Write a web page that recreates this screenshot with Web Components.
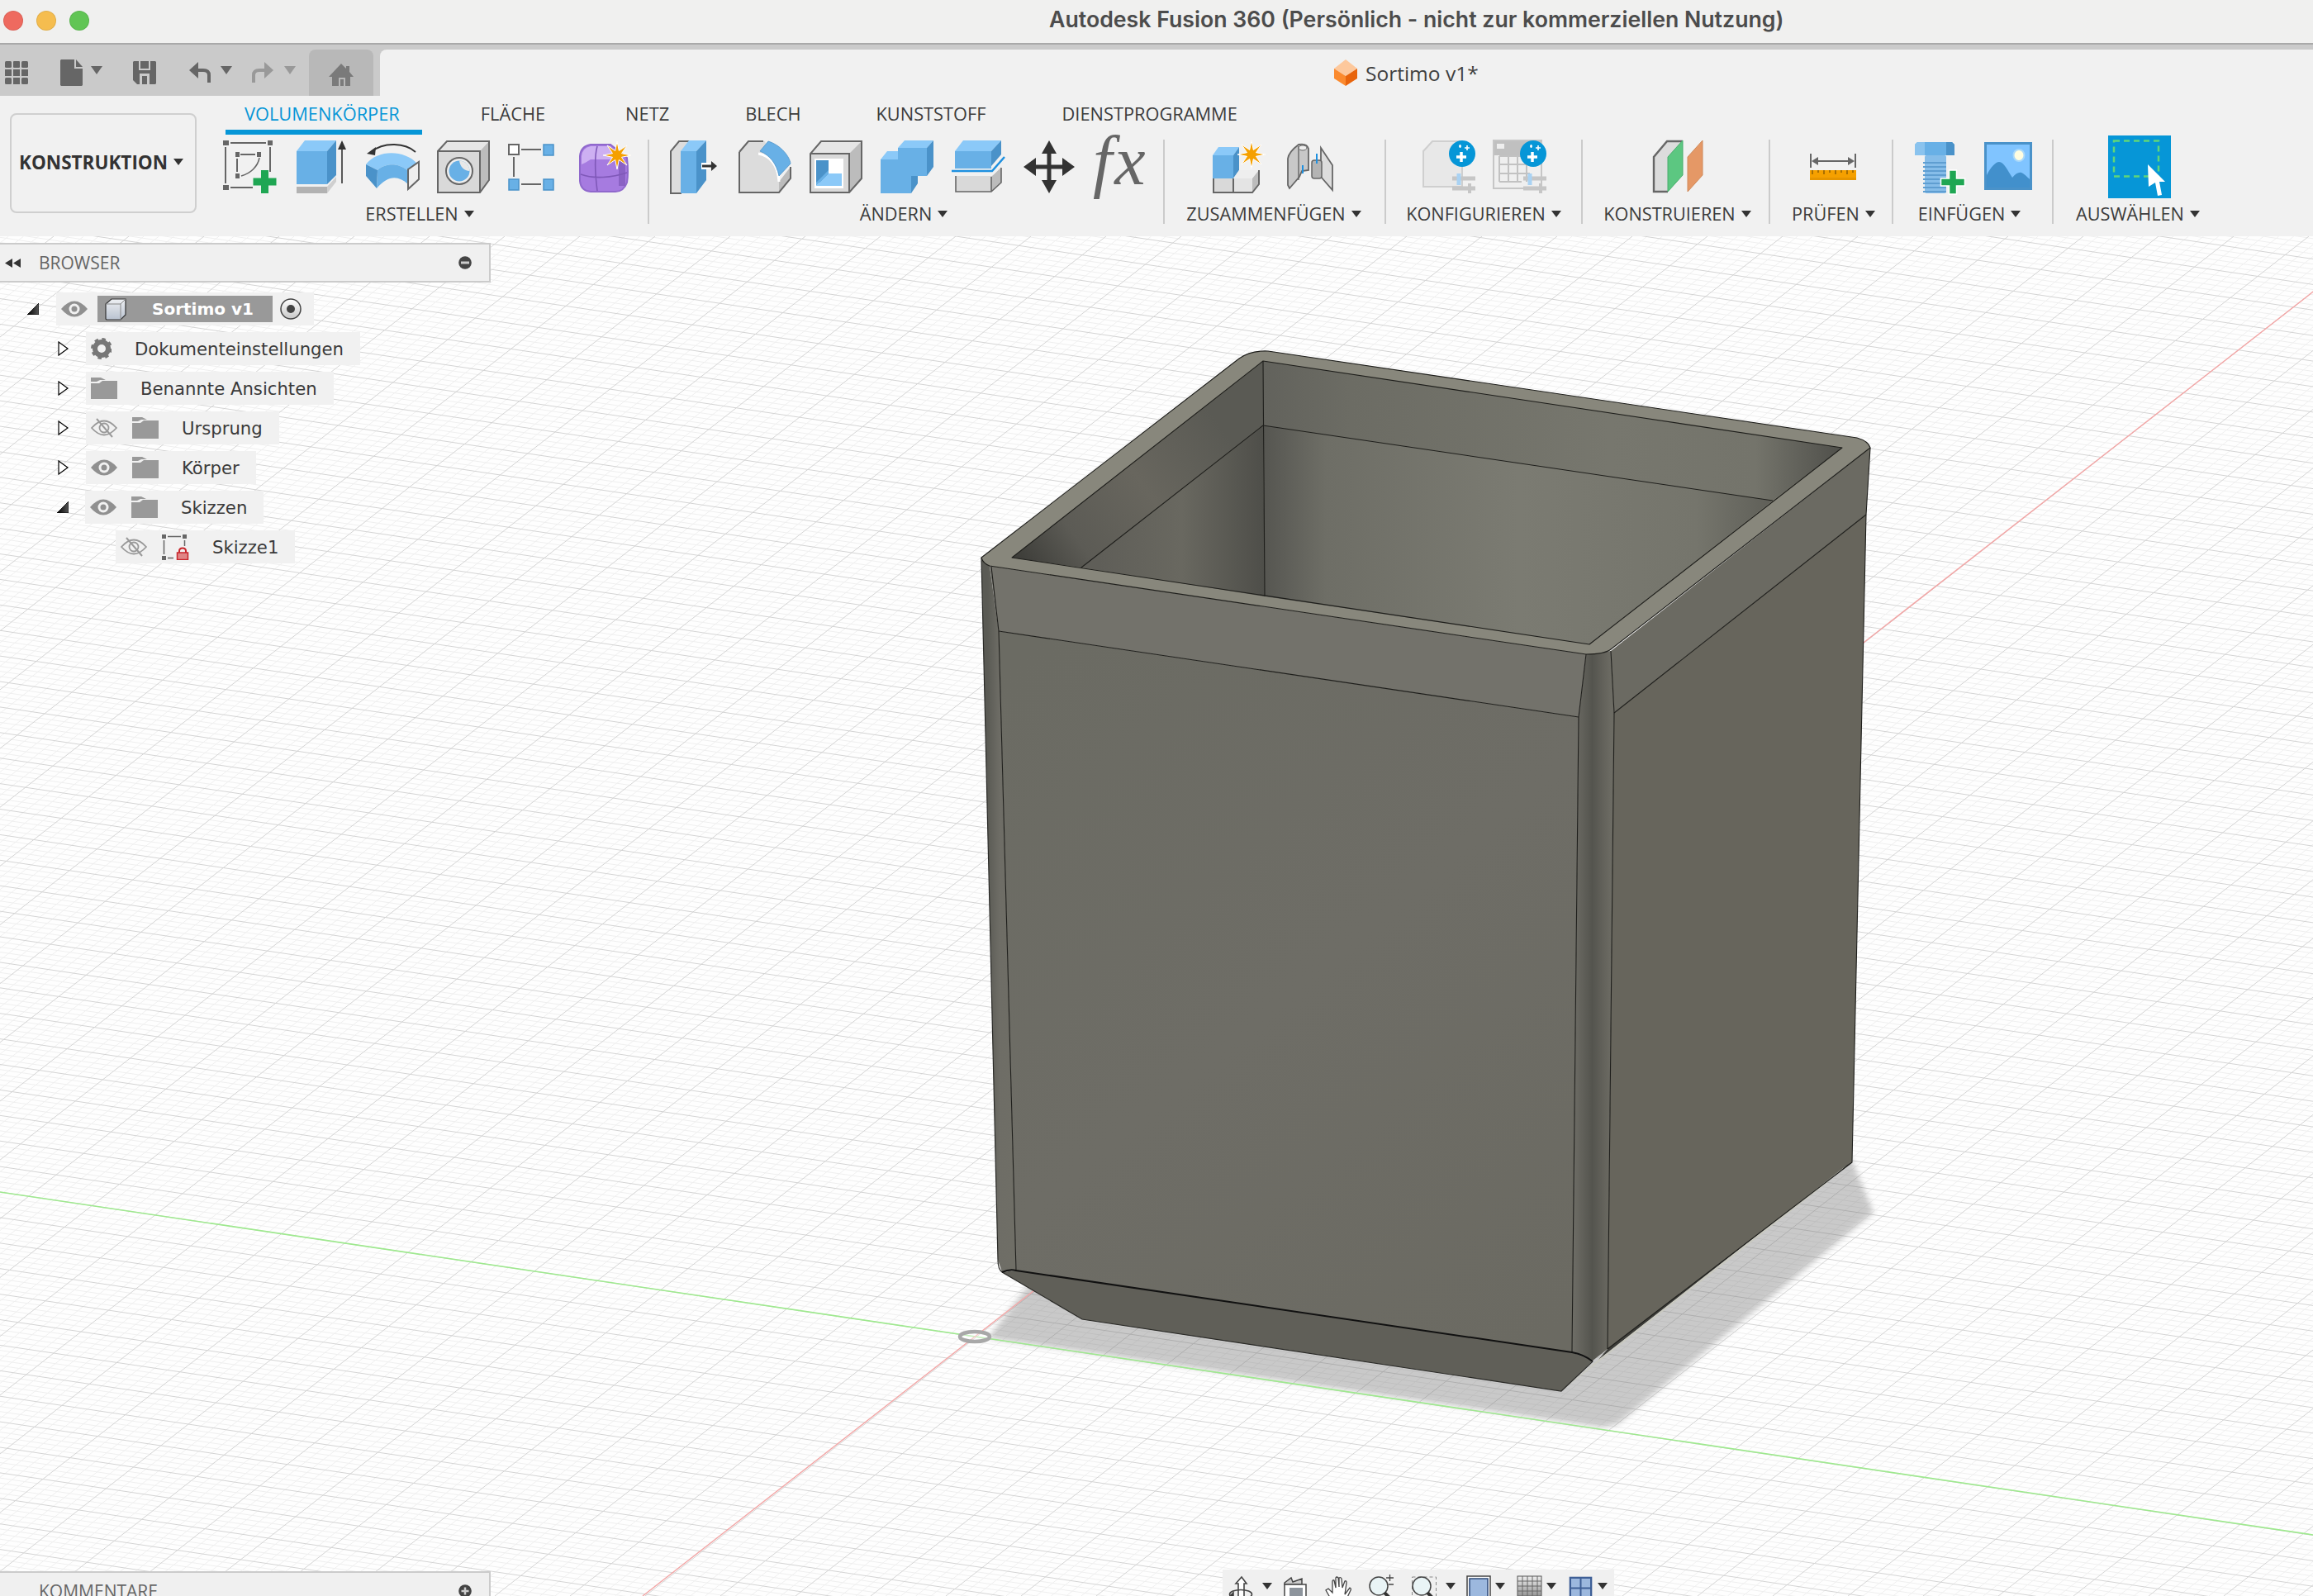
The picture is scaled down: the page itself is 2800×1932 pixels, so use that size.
<!DOCTYPE html>
<html lang="de">
<head>
<meta charset="utf-8">
<title>Autodesk Fusion 360</title>
<style>
  html, body { margin: 0; padding: 0; background: #fff; overflow: hidden; }
</style>
</head>
<body>
<fusion-app></fusion-app>
<script>
const BLUE = '#68b0e6', BLUE_LT = '#8bc9f8', BLUE_DK = '#4a92c9', EDGE = '#666';

function star(cx, cy, R, r, n) {
  let pts = [];
  for (let i = 0; i < n * 2; i++) {
    const a = -Math.PI / 2 + i * Math.PI / n, q = i % 2 ? r : R;
    pts.push((cx + q * Math.cos(a)).toFixed(1) + ',' + (cy + q * Math.sin(a)).toFixed(1));
  }
  return `<polygon points="${pts.join(' ')}" fill="#f5a000" stroke="#fff" stroke-width="1"/>`;
}

function plus(cx, cy, s, t) {
  const a = s / 2, b = t / 2;
  return `<path d="M${cx - b},${cy - a}h${t}v${a - b}h${a - b}v${t}h-${a - b}v${a - b}h-${t}v-${a - b}h-${a - b}v-${t}h${a - b}z" fill="#1fa653"/>`;
}

function sparkle(cx, cy) {
  return `<circle cx="${cx}" cy="${cy}" r="16" fill="#0696d7"/>
    <path d="M${cx - 7},${cy + 4}h12M${cx - 1},${cy - 2}v12" stroke="#fff" stroke-width="3.5"/>
    <path d="M${cx + 3},${cy - 7}h6M${cx + 6},${cy - 10}v6M${cx - 4},${cy - 9}h3M${cx - 2.5},${cy - 11}v4" stroke="#fff" stroke-width="1.6"/>`;
}

// toolbar icons: [dx, dy, markup], drawn in a 64 box
const TOOLS = {
  sketch: [0, 0, `
    <g fill="${EDGE}"><rect x="0" y="0" width="7" height="6"/><rect x="54" y="0" width="6" height="6"/><rect x="0" y="54" width="7" height="6"/>
    <rect x="15" y="14" width="5" height="6"/><rect x="41" y="14" width="5" height="6"/><rect x="15" y="40" width="5" height="6"/></g>
    <path d="M9,3H52M3,8V52M9,57H36M57,8V38M21,17H39M17,22V38" stroke="${EDGE}" stroke-width="2" fill="none"/>
    <path d="M44,21C42,32 33,40 22,43" stroke="${EDGE}" stroke-width="1.6" fill="none"/>
    ${plus(50.5, 50, 28, 9)}`],
  extrude: [3, 0, `
    <polygon points="0,56 37,56 37,64 0,64" fill="#b2b2b2"/><polygon points="37,56 48,44 48,50 37,64" fill="#cfcfcf"/>
    <polygon points="0,13 37,13 37,53 0,53" fill="${BLUE}"/><polygon points="0,13 10,0 48,0 37,13" fill="${BLUE_LT}"/>
    <polygon points="37,13 48,0 48,42 37,53" fill="${BLUE_DK}"/>
    <path d="M55,52V8" stroke="#333" stroke-width="1.6"/><polygon points="55,0 60,11 50,11" fill="#333"/>`],
  revolve: [1, 3, `
    <path d="M60,11C48,0 22,-2 6,11" fill="none" stroke="#333" stroke-width="1.8"/><polygon points="1,13 12,5 11,15" fill="#333"/>
    <path d="M0,26C14,8 46,8 62,25L51,34C40,24 24,24 14,33Z" fill="${BLUE_LT}"/>
    <path d="M14,33C24,24 40,24 51,34V50C38,38 26,40 13,55Z" fill="${BLUE}"/>
    <path d="M0,26L14,33L13,55L0,40Z" fill="${BLUE_DK}"/>
    <polygon points="51,32 64,23 64,44 51,56" fill="#eee" stroke="${EDGE}" stroke-width="2"/>`],
  hole: [1, 0, `
    <polygon points="1,13 12,1 63,1 52,13" fill="#e6e6e6"/><polygon points="52,13 63,1 63,48 52,63" fill="#bcbcbc"/>
    <rect x="1" y="13" width="51" height="50" fill="#d9d9d9"/>
    <path d="M1,63V13L12,1H63V48L52,63ZM1,13H52V63" fill="none" stroke="${EDGE}" stroke-width="2"/>
    <circle cx="27" cy="37" r="16" fill="#eee" stroke="${EDGE}" stroke-width="2"/>
    <circle cx="27" cy="37" r="12.5" fill="${BLUE}"/>
    <path d="M27,24.5A12.5,12.5 0 0 1 39.5,37C33,37 28,32 27,24.5Z" fill="#e8e8e8"/>`],
  pattern: [1, 4, `
    <rect x="1" y="1" width="12" height="12" fill="#fff" stroke="${EDGE}" stroke-width="2"/>
    <g fill="${BLUE}" stroke="${BLUE_DK}" stroke-width="1.5"><rect x="43" y="1" width="12" height="13"/><rect x="1" y="43" width="12" height="13"/><rect x="43" y="43" width="12" height="13"/></g>
    <path d="M16,7H40M7,16V40M16,49H40" stroke="${EDGE}" stroke-width="2"/>`],
  form: [1, 1, `
    <path d="M1,18Q2,6 14,4H38L58,20Q60,38 58,50Q54,61 44,61H14Q2,60 1,48Z" fill="#a67be0" stroke="#8f68cc" stroke-width="2"/>
    <path d="M3,18Q4,8 14,6H38L50,22H14Q8,26 3,28Z" fill="#cdb0f2"/>
    <path d="M22,6C18,20 20,44 22,60M2,40C18,46 40,44 58,38" fill="none" stroke="#7f58b8" stroke-width="1.6"/>
    <rect x="48" y="24" width="8" height="30" fill="#7f58b8" opacity=".7"/>
    ${star(46, 17, 17, 6, 8)}`],
  presspull: [4, 0, `
    <path d="M14,64H1V13L11,1H24" fill="#ddd" stroke="${EDGE}" stroke-width="2"/>
    <polygon points="13,13 23,0 44,0 32,13" fill="${BLUE_LT}"/><rect x="13" y="13" width="19" height="51" fill="${BLUE}"/>
    <polygon points="32,13 44,0 44,48 32,64" fill="${BLUE_DK}"/>
    <rect x="38" y="27" width="10" height="8" fill="#fff"/>
    <path d="M39,31H51" stroke="#333" stroke-width="3"/><polygon points="50,25 57,31 50,37" fill="#333"/>`],
  fillet: [1, 0, `
    <path d="M1,63V14L12,1H32L49,46V63Z" fill="#dcdcdc"/>
    <path d="M49,50L63,32V46L49,63Z" fill="#bcbcbc"/>
    <path d="M1,14L12,1H30M1,14V63H49L63,46V32" fill="none" stroke="${EDGE}" stroke-width="2"/>
    <path d="M24,16C38,18 48,30 49,50" fill="none" stroke="#fff" stroke-width="3"/>
    <path d="M26,13L36,1C52,6 62,20 63,28L49,43C46,28 38,18 26,13Z" fill="${BLUE}" stroke="${BLUE_DK}" stroke-width=".8"/>`],
  chamfer: [1, 0, `
    <polygon points="1,16 14,1 63,1 48,16" fill="#e6e6e6"/><polygon points="48,16 63,1 63,46 48,63" fill="#bcbcbc"/>
    <rect x="1" y="16" width="47" height="47" fill="#d9d9d9"/>
    <path d="M1,63V16L14,1H63V46L48,63ZM1,16H48V63" fill="none" stroke="${EDGE}" stroke-width="2"/>
    <rect x="6" y="22" width="35" height="36" fill="#fff"/>
    <rect x="8" y="24" width="15" height="27" fill="${BLUE_DK}"/>
    <polygon points="8,55 23,40 39,40 39,55" fill="${BLUE_LT}"/>
    <polygon points="8,51 23,36 23,40 8,55" fill="${BLUE}"/>`],
  combine: [1, 0, `
    <polygon points="0,23 8,13 22,13 22,23" fill="${BLUE_LT}"/>
    <rect x="0" y="23" width="37" height="41" fill="${BLUE}"/>
    <polygon points="37,43 37,64 45,52 45,43" fill="${BLUE_DK}"/>
    <polygon points="21,9 29,0 64,0 56,9" fill="${BLUE_LT}"/>
    <rect x="21" y="9" width="35" height="34" fill="${BLUE}"/>
    <polygon points="56,9 64,0 64,32 56,43" fill="${BLUE_DK}"/>`],
  split: [1, 0, `
    <polygon points="4,13 14,0 60,0 48,13" fill="${BLUE_LT}"/><rect x="4" y="13" width="44" height="21" fill="${BLUE}"/>
    <polygon points="48,13 60,0 60,17 48,31" fill="${BLUE_DK}"/>
    <path d="M0,37H49L64,20" fill="none" stroke="#1e90e0" stroke-width="2.5"/>
    <polygon points="5,43 50,43 60,32 60,51 48,62 5,62" fill="#d9d9d9"/>
    <polygon points="48,44 60,33 60,51 48,62" fill="#bcbcbc"/>
    <path d="M5,43V62H48L60,51V33M48,44V62" fill="none" stroke="${EDGE}" stroke-width="1.6"/>`],
  move: [2, 0, `
    <path d="M31,0L40,16H33.5V29.5H47V21L62,32L47,43V34.5H33.5V48H40L31,64L22,48H28.5V34.5H15V43L0,32L15,21V29.5H28.5V16H22Z" fill="#333"/>`],
  fx: [0, 0, `<text x="0" y="53" font-family="'Liberation Serif',serif" font-style="italic" font-size="84" letter-spacing="3" fill="#666">fx</text>`],
  joinnew: [0, 0, `
    <polygon points="0,18 7,8 32,8 25,18" fill="${BLUE_LT}"/><rect x="0" y="18" width="25" height="28" fill="${BLUE}"/>
    <polygon points="25,18 32,8 32,36 25,46" fill="${BLUE_DK}"/>
    <polygon points="25,46 32,36 56,36 47,46" fill="#eee"/>
    <rect x="1" y="46" width="24" height="17" fill="#d9d9d9"/><rect x="25" y="46" width="23" height="17" fill="#e4e4e4"/>
    <polygon points="48,46 56,36 56,53 48,63" fill="#bcbcbc"/>
    <path d="M1,46V63H48L56,53V36M25,46V63" fill="none" stroke="${EDGE}" stroke-width="2"/>
    ${star(47, 17, 17, 6, 8)}`],
  joint: [4, 4, `
    <path d="M1,18Q2,10 14,1Q24,-1 26,6V32L18,33L15,40L3,54L1,50Z" fill="#c8c8c8" stroke="${EDGE}" stroke-width="1.8"/>
    <path d="M14,3V44" stroke="${EDGE}" stroke-width="1.4"/>
    <ellipse cx="19" cy="5" rx="5" ry="3" fill="#eee" stroke="${EDGE}"/>
    <path d="M41,5L55,26V56L41,40Z" fill="#ddd" stroke="${EDGE}" stroke-width="1.8"/>
    <rect x="30" y="20" width="12" height="22" rx="3" fill="#b4b4b4" stroke="${EDGE}" stroke-width="1.5"/>
    <path d="M36,12V24M19,26V36" stroke="#1e90e0" stroke-width="2"/>`],
  config1: [1, 0, `
    <path d="M1,56V13L12,1H48V56Z" fill="#e8e8e8" stroke="#cfcfcf" stroke-width="2"/>
    ${sparkle(48, 16)}
    <path d="M36,46H64M36,58H64" stroke="#c6c6c6" stroke-width="5"/>
    <path d="M44,40V54" stroke="#a9d2f3" stroke-width="5"/><path d="M57,52V64" stroke="#c6c6c6" stroke-width="4"/>`],
  config2: [1, 0, `
    <rect x="0" y="0" width="58" height="58" fill="#efefef"/>
    <rect x="0" y="0" width="58" height="18" fill="#c0c0c0"/><rect x="4" y="4" width="9" height="6" fill="#eee"/>
    <rect x="0" y="0" width="58" height="58" fill="none" stroke="#c6c6c6" stroke-width="2"/>
    <path d="M7,19V50M18,19V50M29,19V50M40,19V50M7,19H44M7,29H44M7,40H44M7,50H34" stroke="#c2c2c2" stroke-width="2" fill="none"/>
    ${sparkle(48, 16)}
    <path d="M36,46H64M36,58H64" stroke="#c6c6c6" stroke-width="5"/>
    <path d="M44,40V54" stroke="#a9d2f3" stroke-width="5"/><path d="M57,52V64" stroke="#c6c6c6" stroke-width="4"/>`],
  construct: [4, 0, `
    <path d="M18,62H1V20L17,1H36" fill="#dcdcdc" stroke="${EDGE}" stroke-width="2.4"/>
    <polygon points="18,20 36,0 36,42 18,62" fill="#5cc781" stroke="#48ad6c"/>
    <polygon points="42,20 60,0 60,42 42,62" fill="#e59866" stroke="#d08a5a"/>`],
  measure: [6, 16, `
    <path d="M1,0V17M55,0V17M5,9H51" stroke="${EDGE}" stroke-width="2"/>
    <polygon points="2,9 10,4 10,14" fill="${EDGE}"/><polygon points="54,9 46,4 46,14" fill="${EDGE}"/>
    <rect x="0" y="20" width="56" height="12" fill="#f5a000"/><rect x="0" y="29" width="56" height="3" fill="#e69500"/>
    <path d="M3,20v5M10,20v3M17,20v5M24,20v3M31,20v5M38,20v3M45,20v5M52,20v3" stroke="#8a5a00" stroke-width="1.4"/>`],
  bolt: [5, 2, `
    <path d="M0,3L3,0H45L48,3V16H0Z" fill="${BLUE}"/><path d="M38,0H45L48,3V16H38Z" fill="${BLUE_DK}"/><path d="M0,3L3,0H12V16H0Z" fill="#8ac3ee"/>
    <rect x="12" y="16" width="26" height="46" rx="2" fill="#86bde9"/>
    <path d="M10,25H38M10,30H38M10,35H38M10,40H38M10,45H38M10,50H38M10,55H38M10,60H38" stroke="#5f9ed1" stroke-width="2"/>
    <path d="M41.5,34h9v10h10v9h-10v10h-9v-10h-10v-9h10z" fill="#1fa653" stroke="#fff" stroke-width="1.5"/>`],
  image: [3, 2, `
    <rect x="1.5" y="1.5" width="55" height="55" fill="#80c4ff" stroke="#4a92c9" stroke-width="3"/>
    <ellipse cx="42" cy="16" rx="6.5" ry="7" fill="#fffde0" stroke="#a9d8fa" stroke-width="2"/>
    <path d="M3,40C8,30 14,24 18,24C24,24 28,34 34,43C38,38 42,36 45,37C48,38 52,42 55,45V55H3Z" fill="#4290cc"/>`],
  select: [-7, -6, `
    <rect x="0" y="0" width="76" height="76" fill="#0696d7"/>
    <rect x="7" y="6.500" width="54" height="43" fill="none" stroke="#5fd67a" stroke-width="2.500" stroke-dasharray="7 5"/>
    <polygon points="48,35 69,56 62,56 65,72 60,73 57,57 49,62" fill="#fff"/>`]
};

class UiCaret extends HTMLElement {
  constructor() {
    super();
    this.attachShadow({ mode: 'open' }).innerHTML = `
      <style>
        :host {
          display: inline-block;
          width: 0;
          height: 0;
          border-left: var(--w, 6px) solid transparent;
          border-right: var(--w, 6px) solid transparent;
          border-top: var(--h, 8px) solid var(--c, #333);
        }
      </style>`;
  }
}

class ToolIcon extends HTMLElement {
  connectedCallback() {
    const [dx, dy, body] = TOOLS[this.getAttribute('name')];
    this.attachShadow({ mode: 'open' }).innerHTML = `
      <style>
        :host { display: block; width: 64px; height: 64px; }
        svg { display: block; overflow: visible; }
      </style>
      <svg width="64" height="64" viewBox="0 0 64 64"><g transform="translate(${dx} ${dy})">${body}</g></svg>`;
  }
}

class RibbonGroup extends HTMLElement {
  connectedCallback() {
    const w = this.getAttribute('width');
    const first = this.hasAttribute('first');
    const shift = Number(this.getAttribute('shift') || 0);
    this.attachShadow({ mode: 'open' }).innerHTML = `
      <style>
        :host {
          display: flex;
          flex-direction: column;
          align-items: center;
          box-sizing: border-box;
          width: ${w}px;
          height: 102px;
          border-left: 2px solid ${first ? 'transparent' : '#cbcbcb'};
        }
        .tools { display: flex; gap: 22px; height: 78px; padding-top: 1px; box-sizing: border-box; }
        .label {
          display: flex;
          align-items: center;
          gap: 7px;
          height: 24px;
          margin-left: ${shift * 2}px;
          font: 400 21.7px/24px "Open Sans", sans-serif;
          color: #3c3c3c;
          white-space: nowrap;
        }
      </style>
      <div class="tools"><slot></slot></div>
      <div class="label"><span>${this.getAttribute('label')}</span><ui-caret></ui-caret></div>`;
  }
}

class RibbonTabs extends HTMLElement {
  connectedCallback() {
    const tabs = [['VOLUMENKÖRPER', 0], ['FLÄCHE', 48], ['NETZ', 51], ['BLECH', 46], ['KUNSTSTOFF', 45], ['DIENSTPROGRAMME', 46]];
    this.attachShadow({ mode: 'open' }).innerHTML = `
      <style>
        :host { display: flex; height: 47px; padding-left: 25px; }
        .tab {
          box-sizing: border-box;
          height: 47px;
          padding: 0 23px;
          font: 400 21.8px/44px "Open Sans", sans-serif;
          color: #3c3c3c;
          white-space: nowrap;
        }
        .tab.on { color: #0696d7; border-bottom: 6px solid #0696d7; padding-right: 27px; }
      </style>
      ${tabs.map(([t, gap], i) => `<div class="tab ${i ? '' : 'on'}" style="margin-left:${gap}px">${t}</div>`).join('')}`;
  }
}

class RibbonBar extends HTMLElement {
  constructor() {
    super();
    this.attachShadow({ mode: 'open' }).innerHTML = `
      <style>
        :host { display: flex; height: 170px; background: #f1f1f1; }
        .side { width: 248px; flex: none; padding: 21px 0 0 12px; box-sizing: border-box; }
        .mode {
          box-sizing: border-box;
          width: 226px;
          height: 121px;
          border: 2px solid #cfcfcf;
          border-radius: 8px;
          display: flex;
          align-items: center;
          padding: 0 0 3px 9px;
          gap: 7px;
          font: 700 22.500px "Open Sans", sans-serif;
          color: #333;
          white-space: nowrap;
        }
        .groups { display: flex; margin-top: 6px; }
      </style>
      <div class="side"><div class="mode"><span>KONSTRUKTION</span><ui-caret></ui-caret></div></div>
      <div class="main">
        <ribbon-tabs></ribbon-tabs>
        <div class="groups">
          <ribbon-group first width="536" label="ERSTELLEN" shift="-9">
            <tool-icon name="sketch"></tool-icon><tool-icon name="extrude"></tool-icon><tool-icon name="revolve"></tool-icon>
            <tool-icon name="hole"></tool-icon><tool-icon name="pattern"></tool-icon><tool-icon name="form"></tool-icon>
          </ribbon-group>
          <ribbon-group width="624" label="ÄNDERN" shift="-3">
            <tool-icon name="presspull"></tool-icon><tool-icon name="fillet"></tool-icon><tool-icon name="chamfer"></tool-icon>
            <tool-icon name="combine"></tool-icon><tool-icon name="split"></tool-icon><tool-icon name="move"></tool-icon><tool-icon name="fx"></tool-icon>
          </ribbon-group>
          <ribbon-group width="268" label="ZUSAMMENFÜGEN" shift="-1">
            <tool-icon name="joinnew"></tool-icon><tool-icon name="joint"></tool-icon>
          </ribbon-group>
          <ribbon-group width="238" label="KONFIGURIEREN">
            <tool-icon name="config1"></tool-icon><tool-icon name="config2"></tool-icon>
          </ribbon-group>
          <ribbon-group width="227" label="KONSTRUIEREN" shift="2">
            <tool-icon name="construct"></tool-icon>
          </ribbon-group>
          <ribbon-group width="149" label="PRÜFEN" shift="3">
            <tool-icon name="measure"></tool-icon>
          </ribbon-group>
          <ribbon-group width="194" label="EINFÜGEN" shift="-4">
            <tool-icon name="bolt"></tool-icon><tool-icon name="image"></tool-icon>
          </ribbon-group>
          <ribbon-group width="212" label="AUSWÄHLEN" shift="-3">
            <tool-icon name="select"></tool-icon>
          </ribbon-group>
        </div>
      </div>`;
  }
}

class MacTitlebar extends HTMLElement {
  constructor() {
    super();
    this.attachShadow({ mode: 'open' }).innerHTML = `
      <style>
        :host {
          display: flex;
          align-items: center;
          box-sizing: border-box;
          height: 54px;
          padding: 0 0 2px 4px;
          background: #f0f0ef;
          border-bottom: 2px solid #a9a9a9;
        }
        .dot { width: 24px; height: 24px; border-radius: 50%; margin-right: 16px; box-sizing: border-box; border: 1px solid rgba(0,0,0,.08); }
        h1 {
          margin: -5px 0 0 1146px;
          font: 600 26.700px "Inter", sans-serif;
          color: #4c4c4c;
          white-space: nowrap;
        }
      </style>
      <span class="dot" style="background:#ee6a5f"></span>
      <span class="dot" style="background:#f5bd4f"></span>
      <span class="dot" style="background:#61c555"></span>
      <h1>Autodesk Fusion 360 (Persönlich - nicht zur kommerziellen Nutzung)</h1>`;
  }
}

class QuickBar extends HTMLElement {
  constructor() {
    super();
    this.attachShadow({ mode: 'open' }).innerHTML = `
      <style>
        :host { display: flex; height: 62px; background: #cacaca; padding-left: 6px; box-sizing: border-box; }
        .item { display: flex; align-items: center; height: 56px; margin-top: 6px; flex: none; }
        svg { display: block; }
        ui-caret { --w: 7.5px; --h: 10px; --c: #666; display: block; margin-top: -6px; }
        .home {
          display: flex; justify-content: center; padding-top: 17px; box-sizing: border-box;
          width: 78px; height: 56px; margin: 6px 0 0 16px; background: #b8b8b8; border-radius: 8px 8px 0 0; flex: none;
        }
        .doc {
          flex: 1; height: 56px; margin: 6px 0 0 8px; background: #f1f1f1; border-radius: 8px 0 0 0;
          display: flex; align-items: center; padding-left: 1155px; box-sizing: border-box;
          font: 400 24.5px "Open Sans", sans-serif; color: #3f3f3f; gap: 10px; white-space: nowrap;
        }
      </style>
      <div class="item"><svg width="28" height="28" fill="#666">
        <rect x="0" y="0" width="8" height="8" rx="1.500"/><rect x="10" y="0" width="8" height="8" rx="1"/><rect x="20" y="0" width="8" height="8" rx="1.500"/>
        <rect x="0" y="10" width="8" height="8"/><rect x="10" y="10" width="8" height="8"/><rect x="20" y="10" width="8" height="8"/>
        <rect x="0" y="20" width="8" height="8" rx="1.500"/><rect x="10" y="20" width="8" height="8"/><rect x="20" y="20" width="8" height="8" rx="1.500"/>
      </svg></div>
      <div class="item" style="margin-left:39px"><svg width="27" height="32" fill="#666"><path d="M1,0H17V11H27V31L26,32H1L0,31V1Z"/><path d="M19,0L27,9H19Z"/></svg></div>
      <div class="item" style="margin-left:10px"><ui-caret></ui-caret></div>
      <div class="item" style="margin-left:37px"><svg width="28" height="28"><path d="M1,0H27L28,1V27L27,28H5L0,23V1Z" fill="#666"/><path d="M7,0H21V11H7Z" fill="#cacaca"/><rect x="9" y="0" width="10" height="9" fill="#666"/><path d="M8,15H20V28H8Z" fill="#cacaca"/><rect x="11" y="18" width="6" height="10" fill="#666"/></svg></div>
      <div class="item" style="margin-left:40px"><svg width="26" height="26" fill="none"><path d="M24,25V16Q24,10 17,10H4" stroke="#666" stroke-width="4"/><polygon points="0,10 11,0 11,20" fill="#666"/></svg></div>
      <div class="item" style="margin-left:12px"><ui-caret></ui-caret></div>
      <div class="item" style="margin-left:24px"><svg width="26" height="26" fill="none"><path d="M2,25V16Q2,10 9,10H22" stroke="#999" stroke-width="4"/><polygon points="26,10 15,0 15,20" fill="#999"/></svg></div>
      <div class="item" style="margin-left:13px"><ui-caret style="--c:#999"></ui-caret></div>
      <div class="home"><svg width="30" height="28"><path d="M15,0L21,6V3H25V10L30,16H26V27H4V16H0Z" fill="#7a7a7a"/><rect x="12" y="17" width="8" height="10" fill="#b8b8b8"/><rect x="14" y="19" width="4" height="8" fill="#7a7a7a"/></svg></div>
      <div class="doc"><svg width="28" height="32"><polygon points="14,0 28,11 14,20 0,11" fill="#fdc89c"/><polygon points="0,11 14,20 14,32 0,23" fill="#fb8a2e"/><polygon points="28,11 14,20 14,32 28,23" fill="#e8640c"/></svg><span>Sortimo v1*</span></div>`;
  }
}

const TREE_ICONS = {
  eye: `<svg width="32" height="20"><path d="M0,10Q16,-9 32,10Q16,29 0,10Z" fill="#909090"/><circle cx="16" cy="10" r="6.500" fill="#f1f1f1"/><circle cx="16" cy="10" r="3.500" fill="#909090"/></svg>`,
  eyeoff: `<svg width="32" height="24"><path d="M1,12Q16,-5 31,12Q16,29 1,12Z" fill="none" stroke="#999" stroke-width="1.8"/><circle cx="16" cy="12" r="5.500" fill="none" stroke="#999" stroke-width="1.8"/><path d="M7,1L26,23" stroke="#999" stroke-width="2"/></svg>`,
  gear: `<svg width="25" height="26"><circle cx="13" cy="13" r="8" fill="none" stroke="#777" stroke-width="6"/><circle cx="13" cy="13" r="11" fill="none" stroke="#777" stroke-width="4" stroke-dasharray="4.320 4.320"/></svg>`,
  folder: `<svg width="32" height="26" fill="#999"><path d="M0,0H12L18,3H11L7,5H0Z"/><path d="M0,7H10L14,4H32V26H0Z"/></svg>`,
  sketch: `<svg width="33" height="31" fill="#666"><rect x="0" y="0" width="5" height="5"/><rect x="25" y="0" width="5" height="5"/><rect x="0" y="26" width="5" height="5"/>
    <path d="M7,2.500H23M2.500,7V24M7,28.500H14M27.500,7V14" stroke="#666" stroke-width="1.500" fill="none"/>
    <path d="M21,22V20Q21,16.500 25,16.500Q29,16.500 29,20V22" fill="none" stroke="#c8252b" stroke-width="2"/><rect x="18.500" y="22" width="13" height="8.500" fill="#e08585" stroke="#c8252b" stroke-width="1.500"/></svg>`
};

class TreeRow extends HTMLElement {
  connectedCallback() {
    const toggle = this.getAttribute('toggle');
    const indent = this.getAttribute('indent') || 104;
    const icons = (this.getAttribute('icons') || '').split(' ').filter(Boolean);
    const arrow = toggle === 'open'
      ? `<svg class="tog" width="14" height="14" style="margin-left:${indent - 35}px"><defs><linearGradient id="t" x1="0" y1="0" x2="1" y2="0"><stop offset="0" stop-color="#000"/><stop offset="1" stop-color="#555"/></linearGradient></defs><polygon points="14,0 14,14 0,14" fill="url(#t)" stroke="#000" stroke-width=".8"/></svg>`
      : toggle === 'closed'
        ? `<svg class="tog" width="14" height="18" style="margin-left:${indent - 34}px"><polygon points="1,1 12,9 1,17" fill="#fff" stroke="#000" stroke-width="1.200"/></svg>`
        : `<span style="width:${indent}px;flex:none"></span>`;
    this.attachShadow({ mode: 'open' }).innerHTML = `
      <style>
        :host { display: flex; align-items: center; height: 40px; }
        svg { display: block; flex: none; }
        .tog { margin-right: 20px; }
        .box {
          display: flex; align-items: center; height: 40px; padding: 0 20px 0 6px; background: #f1f1f1; gap: 18px;
          font: 400 21.2px "DejaVu Sans", sans-serif; color: #3a3a3a; white-space: nowrap;
        }
        .text { margin-left: 10px; }
      </style>
      ${arrow}
      <div class="box">${icons.map(n => TREE_ICONS[n]).join('')}<span class="text"><slot></slot></span></div>`;
  }
}

class RootRow extends HTMLElement {
  constructor() {
    super();
    this.attachShadow({ mode: 'open' }).innerHTML = `
      <style>
        :host { display: flex; align-items: center; height: 40px; padding-left: 33px; }
        svg { display: block; flex: none; }
        .box { display: flex; align-items: center; height: 40px; margin-left: 21px; padding: 0 15px 0 6px; background: #f1f1f1; }
        .sel {
          display: flex; align-items: center; box-sizing: border-box; width: 212px; height: 32px; margin: 0 9px 0 12px; padding-left: 9px; background: #999;
          font: 700 20px "DejaVu Sans", sans-serif; color: #fff; white-space: nowrap; gap: 31px;
        }
      </style>
      <svg width="14" height="14"><defs><linearGradient id="r" x1="0" y1="0" x2="1" y2="0"><stop offset="0" stop-color="#000"/><stop offset="1" stop-color="#555"/></linearGradient></defs><polygon points="14,0 14,14 0,14" fill="url(#r)" stroke="#000" stroke-width=".8"/></svg>
      <div class="box">
        ${TREE_ICONS.eye}
        <div class="sel">
          <svg width="26" height="27"><defs><linearGradient id="c" x1="0" y1="0" x2="0" y2="1"><stop offset="0" stop-color="#eef0f3"/><stop offset="1" stop-color="#b9c2d0"/></linearGradient></defs>
            <path d="M1,7L8,1H25V20L19,26H2L1,25Z" fill="url(#c)" stroke="#333" stroke-width="1.200"/><path d="M1,7H19V26M19,7L25,1" fill="none" stroke="#888"/></svg>
          <span>Sortimo v1</span>
        </div>
        <svg width="26" height="26"><defs><linearGradient id="g" x1="0" y1="0" x2="0" y2="1"><stop offset="0" stop-color="#fff"/><stop offset="1" stop-color="#c8c8c8"/></linearGradient></defs><circle cx="13" cy="13" r="12" fill="url(#g)" stroke="#444" stroke-width="1.500"/><circle cx="13" cy="13" r="5" fill="#444"/></svg>
      </div>`;
  }
}

class PanelHeader extends HTMLElement {
  connectedCallback() {
    const sign = this.getAttribute('sign') === 'plus'
      ? '<path d="M3.500,8H12.500M8,3.500V12.500" stroke="#ccc" stroke-width="2.500"/>'
      : '<path d="M3,8H13" stroke="#ccc" stroke-width="3"/>';
    const back = this.hasAttribute('back')
      ? '<svg class="back" width="19" height="11" fill="#333"><polygon points="0,5.500 9,0 9,11"/><polygon points="10,5.500 19,0 19,11"/></svg>'
      : '';
    this.attachShadow({ mode: 'open' }).innerHTML = `
      <style>
        :host {
          display: flex; align-items: center; box-sizing: border-box; height: 48px; padding-left: 6px;
          background: #f0f0f0; border: solid #cbcbcb; border-width: 2px 2px 2px 0;
          font: 400 21px "Open Sans", sans-serif; color: #666;
        }
        .back { display: block; margin-right: 22px; }
        .text { margin-left: ${back ? 0 : 41}px; flex: 1; }
        svg.sign { display: block; margin-right: 21px; }
      </style>
      ${back}<span class="text"><slot></slot></span>
      <svg class="sign" width="16" height="16"><circle cx="8" cy="8" r="7.800" fill="#444"/>${sign}</svg>`;
  }
}

class BrowserPanel extends HTMLElement {
  constructor() {
    super();
    this.attachShadow({ mode: 'open' }).innerHTML = `
      <style>
        :host { display: block; position: absolute; left: 0; top: 8px; width: 594px; }
        .tree { display: flex; flex-direction: column; gap: 8px; margin-top: 12px; }
      </style>
      <panel-header back>BROWSER</panel-header>
      <div class="tree">
        <root-row></root-row>
        <tree-row toggle="closed" icons="gear">Dokumenteinstellungen</tree-row>
        <tree-row toggle="closed" icons="folder">Benannte Ansichten</tree-row>
        <tree-row toggle="closed" icons="eyeoff folder">Ursprung</tree-row>
        <tree-row toggle="closed" icons="eye folder">Körper</tree-row>
        <tree-row toggle="open" icons="eye folder">Skizzen</tree-row>
        <tree-row indent="140" icons="eyeoff sketch">Skizze1</tree-row>
      </div>`;
  }
}

class CommentPanel extends HTMLElement {
  constructor() {
    super();
    this.attachShadow({ mode: 'open' }).innerHTML = `
      <style>:host { display: block; position: absolute; left: 0; top: 1616px; width: 594px; }</style>
      <panel-header sign="plus">KOMMENTARE</panel-header>`;
  }
}

class NavBar extends HTMLElement {
  constructor() {
    super();
    const cap = ml => `<ui-caret style="margin:8px 0 0 ${ml}px"></ui-caret>`;
    this.attachShadow({ mode: 'open' }).innerHTML = `
      <style>
        :host {
          display: flex; align-items: flex-start; position: absolute; left: 1480px; top: 1614px;
          box-sizing: border-box; width: 474px; height: 40px; padding: 8px 0 0 8px; background: #f0f0f0;
        }
        svg { display: block; flex: none; overflow: visible; }
        ui-caret { flex: none; }
      </style>
      <svg width="29" height="32" fill="none" stroke="#444" stroke-width="1.600"><path d="M15,1L21,9H18V30H11V9H8Z" fill="#fff"/><ellipse cx="14" cy="22" rx="13.500" ry="5.500"/><polygon points="1,24 5,20 5,27" fill="#333"/></svg>
      ${cap(11)}
      <svg width="28" height="32" style="margin-left:14px"><path d="M1,8L9,2L11,7L22,3V10H1Z" fill="#ccc" stroke="#444" stroke-width="1.500"/><rect x="1" y="10" width="26" height="22" fill="#fff" stroke="#444" stroke-width="1.500"/><rect x="7" y="14" width="16" height="18" fill="#8d949c"/></svg>
      <svg width="30" height="32" style="margin-left:23px" fill="#fff" stroke="#444" stroke-width="1.300"><path d="M4,24L0,17L3,15L8,20V7Q8,4 10,5L12,14V2Q13,0 15,2L16,13V2Q18,1 19,3L20,14L23,6Q25,5 25,8L23,22L29,14Q31,15 30,17L23,32H8Z"/></svg>
      <svg width="30" height="32" style="margin-left:22px"><circle cx="12" cy="12" r="11" fill="#e9f4f6" stroke="#444" stroke-width="1.500"/><path d="M19,20L30,31" stroke="#333" stroke-width="4"/><path d="M21,2H30M25.500,-2V6M24,10H30" stroke="#444" stroke-width="1.300"/></svg>
      <svg width="30" height="32" style="margin-left:22px"><rect x=".5" y="1" width="29" height="31" fill="none" stroke="#888" stroke-dasharray="4 3"/><circle cx="12" cy="12" r="11" fill="#e9f4f6" stroke="#444" stroke-width="1.500"/><path d="M19,20L30,31" stroke="#333" stroke-width="4"/></svg>
      ${cap(11)}
      <svg width="28" height="32" style="margin-left:14px"><rect x="0" y="0" width="28" height="30" fill="#fff" stroke="#444" stroke-width="1.500"/><rect x="3" y="3" width="22" height="22" fill="#9cb8de" stroke="#2e4a78" stroke-width="1.500"/></svg>
      ${cap(6)}
      <svg width="29" height="32" style="margin-left:15px"><defs><linearGradient id="gr" x1="0" y1="0" x2="0" y2="1"><stop offset="0" stop-color="#eee"/><stop offset="1" stop-color="#777"/></linearGradient></defs><rect x="0" y="0" width="29" height="32" fill="url(#gr)" stroke="#555"/>
        <path d="M6,0V32M12,0V32M18,0V32M24,0V32M0,6H29M0,12H29M0,18H29M0,24H29" stroke="#666"/></svg>
      ${cap(6)}
      <svg width="29" height="32" style="margin-left:15px"><rect x=".7" y=".7" width="27.600" height="32" fill="#3e5f96"/><rect x="3" y="3" width="10.500" height="10.500" fill="#9cb8de"/><rect x="15.500" y="3" width="10.500" height="10.500" fill="#9cb8de"/><rect x="3" y="15.500" width="10.500" height="10.500" fill="#9cb8de"/><rect x="15.500" y="15.500" width="10.500" height="10.500" fill="#9cb8de"/></svg>
      ${cap(6)}`;
  }
}

class ModelView extends HTMLElement {
  gridPaths() {
    const M = 0.1484, X = 2800;
    let minor = '', major = '';
    for (let k = -320; k <= 120; k++) {
      const y0 = 1443 + k * 30.9 / 5;
      const seg = `M0,${y0.toFixed(1)}L${X},${(y0 + M * X).toFixed(1)}`;
      if (k % 5 === 0) major += seg; else minor += seg;
    }
    for (let k = -160; k <= 115; k++) {
      const xt = 2886 + k * 91 / 5;
      const seg = `M${xt.toFixed(1)},286L${(xt - 2105).toFixed(1)},1932`;
      if (k % 5 === 0) major += seg; else minor += seg;
    }
    return { minor, major };
  }

  connectedCallback() {
    const { minor, major } = this.gridPaths();
    this.attachShadow({ mode: 'open' }).innerHTML = `
      <style>
        :host { display: block; position: relative; height: 1646px; overflow: hidden; background: #fefefe; }
        svg.scene { display: block; }
      </style>
      <svg class="scene" width="2800" height="1646" viewBox="0 286 2800 1646">
        <defs>
          <filter id="soft" x="-5%" y="-5%" width="110%" height="110%"><feGaussianBlur stdDeviation="3.500"/></filter>
          <linearGradient id="backTop" gradientUnits="userSpaceOnUse" x1="1529" y1="0" x2="2230" y2="0">
            <stop offset="0" stop-color="#62625c"/><stop offset=".15" stop-color="#6c6c64"/><stop offset=".6" stop-color="#77776e"/><stop offset=".85" stop-color="#74746b"/><stop offset="1" stop-color="#4f4f4a"/>
          </linearGradient>
          <linearGradient id="floor" gradientUnits="userSpaceOnUse" x1="1531" y1="0" x2="2146" y2="0">
            <stop offset="0" stop-color="#565651"/><stop offset=".12" stop-color="#6e6e66"/><stop offset=".5" stop-color="#7b7b72"/><stop offset=".85" stop-color="#75756c"/><stop offset="1" stop-color="#5f5f58"/>
          </linearGradient>
          <linearGradient id="leftTop" gradientUnits="userSpaceOnUse" x1="1240" y1="690" x2="1480" y2="520">
            <stop offset="0" stop-color="#3c3c38"/><stop offset=".25" stop-color="#5c5b55"/><stop offset=".6" stop-color="#68665e"/><stop offset="1" stop-color="#5a5a54"/>
          </linearGradient>
          <linearGradient id="leftLow" gradientUnits="userSpaceOnUse" x1="1330" y1="0" x2="1531" y2="0">
            <stop offset="0" stop-color="#5f5e58"/><stop offset=".5" stop-color="#696860"/><stop offset="1" stop-color="#4e4e49"/>
          </linearGradient>
          <linearGradient id="front" gradientUnits="userSpaceOnUse" x1="1230" y1="800" x2="1900" y2="1600">
            <stop offset="0" stop-color="#6b6b63"/><stop offset=".5" stop-color="#6e6d66"/><stop offset="1" stop-color="#6b6a62"/>
          </linearGradient>
          <linearGradient id="corner" gradientUnits="userSpaceOnUse" x1="1905" y1="0" x2="1950" y2="0">
            <stop offset="0" stop-color="#6d6c65"/><stop offset=".5" stop-color="#54544e"/><stop offset=".8" stop-color="#63625b"/><stop offset="1" stop-color="#6c6b63"/>
          </linearGradient>
          <linearGradient id="leftStrip" gradientUnits="userSpaceOnUse" x1="1195" y1="0" x2="1225" y2="0">
            <stop offset="0" stop-color="#5a5a54"/><stop offset=".5" stop-color="#6e6d66"/><stop offset="1" stop-color="#6f6e66"/>
          </linearGradient>
        </defs>

        <path d="${minor}" stroke="#efefef" stroke-width="1" fill="none"/>
        <path d="${major}" stroke="#d4d4d4" stroke-width="1" fill="none"/>

        <polygon points="1245,1556 2240,1400 2268,1468 1958,1724 1940,1728 1196,1620" fill="#6e6e6e" opacity=".36" filter="url(#soft)"/>
        <path d="M0,1443L2800,1858" stroke="#9fe98f" stroke-width="1.600"/>
        <path d="M778,1932L2886,286" stroke="#f3a6a6" stroke-width="1.400"/>
        <ellipse cx="1180" cy="1618" rx="18" ry="6" fill="rgba(255,255,255,.4)" stroke="#a8a8a8" stroke-width="4.500"/>

        <!-- right face -->
        <polygon points="1950,788 2264,542 2259,623 1954,863" fill="#6b6a62"/>
        <polygon points="1954,863 2259,623 2242,1407 1946,1633" fill="#67655c"/>
        <polygon points="1946,1633 2242,1407 2236,1410 1935,1646" fill="#3d3d39"/>
        <polygon points="1890,1684 1935,1646 2236,1410 2208,1435" fill="#c9c9c0"/>
        <!-- front face -->
        <polygon points="1209,764 1911,868 1903,1637 1230,1538" fill="url(#front)"/>
        <polygon points="1198,685 1920,792 1911,868 1209,764" fill="#73726b"/>
        <polygon points="1188,675 1198,685 1209,764 1230,1538 1213,1540 1208,1525" fill="url(#leftStrip)"/>
        <polygon points="1920,792 1950,788 1954,863 1946,1633 1928,1647 1903,1637 1911,868" fill="url(#corner)"/>
        <polygon points="1213,1540 1230,1538 1903,1637 1928,1647 1890,1684 1310,1597" fill="#605f58"/>

        <!-- rim and interior -->
        <path d="M1188,675L1500,434Q1514,424 1535,425L2248,530Q2262,534 2264,542L1950,786Q1942,792 1920,792L1198,685Q1190,682 1188,675Z" fill="#88877c"/>
        <polygon points="1529,437 2230,542 2146,606 1529,515" fill="url(#backTop)"/>
        <polygon points="1529,515 2146,606 1924,780 1531,722" fill="url(#floor)"/>
        <polygon points="1225,675 1529,437 1529,515 1309,687" fill="url(#leftTop)"/>
        <polygon points="1309,687 1529,515 1531,722" fill="url(#leftLow)"/>

        <g fill="none" stroke="#1e1e1b" stroke-width="1.100" stroke-linejoin="round">
          <path d="M1225,675L1529,437L2230,542L1924,780Z"/>
          <path d="M1529,437L1531,722M1529,515L2146,606M1529,515L1309,687"/>
          <path d="M1188,675L1500,434Q1514,424 1535,425L2248,530Q2262,534 2264,542L1950,786Q1942,792 1920,792L1198,685Q1190,682 1188,675Z"/>
          <path d="M1209,764L1911,868M1954,863L2259,623"/>
          <path d="M1200,686L1209,764L1230,1538M1920,792L1911,868L1903,1637M1950,788L1954,863L1946,1633"/>
          <path d="M2264,542L2259,623L2242,1407L1946,1633"/>
        </g>
        <path d="M1188,675L1208,1525Q1208,1536 1213,1540L1310,1597L1890,1684L1928,1648" fill="none" stroke="#2a2a27" stroke-width="1.200"/>
        <path d="M1213,1540Q1222,1536 1230,1538L1903,1637Q1918,1640 1928,1648" fill="none" stroke="#111" stroke-width="2"/>
      </svg>
      <browser-panel></browser-panel>
      <comment-panel></comment-panel>
      <nav-bar></nav-bar>`;
  }
}

class FusionApp extends HTMLElement {
  constructor() {
    super();
    this.attachShadow({ mode: 'open' }).innerHTML = `
      <style>
        :host { display: block; width: 2800px; height: 1932px; overflow: hidden; }
      </style>
      <mac-titlebar></mac-titlebar>
      <quick-bar></quick-bar>
      <ribbon-bar></ribbon-bar>
      <model-view></model-view>`;
  }
}

customElements.define('ui-caret', UiCaret);
customElements.define('tool-icon', ToolIcon);
customElements.define('ribbon-group', RibbonGroup);
customElements.define('ribbon-tabs', RibbonTabs);
customElements.define('ribbon-bar', RibbonBar);
customElements.define('mac-titlebar', MacTitlebar);
customElements.define('quick-bar', QuickBar);
customElements.define('tree-row', TreeRow);
customElements.define('root-row', RootRow);
customElements.define('panel-header', PanelHeader);
customElements.define('browser-panel', BrowserPanel);
customElements.define('comment-panel', CommentPanel);
customElements.define('nav-bar', NavBar);
customElements.define('model-view', ModelView);
customElements.define('fusion-app', FusionApp);
</script>
</body>
</html>
